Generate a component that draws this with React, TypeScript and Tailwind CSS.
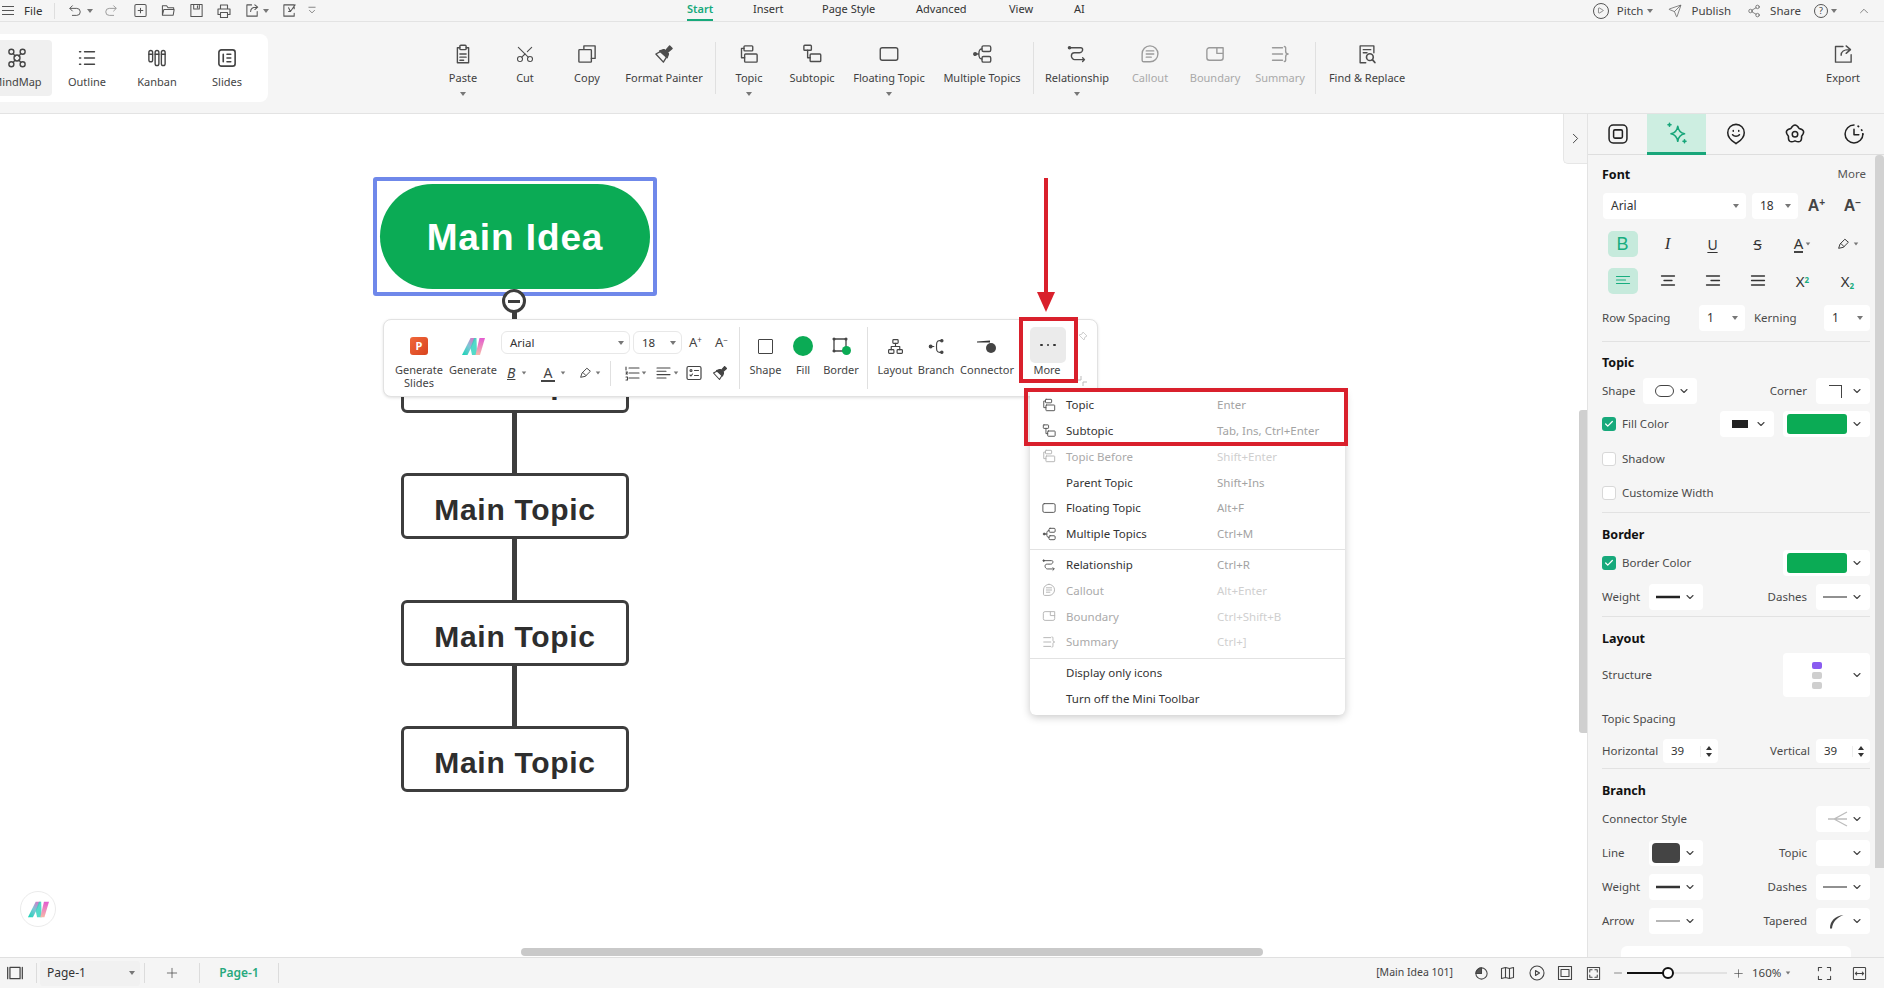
import React from "react";
import { ChevronDown, ChevronRight, ChevronUp, Plus, Minus, Scissors, Play, Send, Share2, Check } from "lucide-react";

type IP = { s?: number; className?: string; children?: React.ReactNode };
const I = ({ s = 20, className = "", children }: IP) => (
  <svg width={s} height={s} viewBox="0 0 16 16" fill="none" stroke="currentColor" strokeWidth="1.1" strokeLinecap="round" strokeLinejoin="round" className={className}>
    {children}
  </svg>
);

const TopicI = (p: IP) => <I {...p}><rect x="4" y="1.5" width="7" height="4" rx=".7" /><rect x="4.5" y="8" width="10" height="6.5" rx=".7" /><path d="M4 3.5H2v7.5h2.5" /></I>;
const SubI = (p: IP) => <I {...p}><rect x="1.5" y="1" width="6" height="4" rx=".7" /><rect x="6.5" y="8" width="8.5" height="6" rx=".7" /><path d="M4.5 5v6h2" /></I>;
const FloatI = (p: IP) => <I {...p}><rect x="1" y="3" width="14" height="10" rx="1.6" /></I>;
const MultiI = (p: IP) => <I {...p}><rect x="8" y="1.5" width="7" height="4.5" rx="1.2" /><rect x="8" y="10" width="7" height="4.5" rx="1.2" /><circle cx="2.5" cy="8" r="1.1" fill="currentColor" /><path d="M3.5 8h2M8 4C6 4 5.5 5 5.5 8s.5 4 2.5 4" /></I>;
const RelI = (p: IP) => <I {...p}><circle cx="2" cy="3" r=".9" fill="currentColor" /><path d="M3 3h8c1.5 0 1.5 1 1.5 1.5S12 7 10 7H6C4 7 3.5 8 3.5 9.5S5 12.5 6 12.5h7.5M12.5 11l1.5 1.5-1.500 1.500" /></I>;
const CallI = (p: IP) => <I {...p}><path d="M8 1.5a6.3 6.3 0 0 1 0 12.700H3c-.8 0-1.3-.5-1.3-1.300V8A6.300 6.300 0 0 1 8 1.500z" /><path d="M5 5.500h6M5 8h6M5 10.500h4" /></I>;
const BoundI = (p: IP) => <I {...p}><path d="M9.500 3H3.500A2 2 0 0 0 1.500 5v6a2 2 0 0 0 2 2h9a2 2 0 0 0 2-2V3H9.500v4.500h5" /></I>;
const SumI = (p: IP) => <I {...p}><path d="M2 3h8M2 8h8M2 13h8M11.500 2c1.500 0 1 2 1 3.500S13 8 14.500 8c-1.500 0-2 1-2 2.500s.5 3.500-1 3.500" /></I>;
const PasteI = (p: IP) => <I {...p}><path d="M5.500 3H3.500v12h9V3h-2" /><rect x="5.500" y="1" width="5" height="3.500" rx=".8" /><path d="M5.500 8h5M5.500 10.500h5M5.500 13h3" /></I>;
const CopyI = (p: IP) => <I {...p}><path d="M5.500 4V1.500h9v10h-3" /><rect x="1.500" y="4.500" width="10" height="10" rx=".6" /></I>;
const BrushI = ({ s = 20, className = "" }: IP) => (
  <svg width={s} height={s} viewBox="0 0 16 16" className={className} fill="none" stroke="currentColor" strokeWidth="1.1" strokeLinejoin="round">
    <path d="M1.500 8 L7.500 14.500 L11.500 8 L8 4.500 Z" />
    <path d="M4.500 5.500 L8 4.500 L11.500 8 L10.500 11 Z" fill="currentColor" />
    <path d="M9 5.500 L12.500 1.500 L14.500 3.500 L10.500 7 Z" fill="currentColor" />
  </svg>
);
const FindI = (p: IP) => <I {...p}><path d="M7 15H2.500V1.500h11V7" /><path d="M5 4.500h6M5 7h3" /><circle cx="10.300" cy="10.500" r="2.700" strokeWidth="1.300" /><path d="M12.300 12.500l2 2.300" strokeWidth="1.400" /></I>;
const ExportI = (p: IP) => <I {...p}><path d="M8 2H2v12.500h12.500V8.500" /><path d="M6.500 9C6.500 6 9 4.500 12.500 4.500M10.500 1.500l3.500 3-3.500 3" fill="none" /></I>;

const Logo = ({ s = 24, id }: { s?: number; id: string }) => (
  <svg width={s} height={s} viewBox="0 0 24 24">
    <defs>
      <linearGradient id={id} x1="0" y1="1" x2="1" y2="0">
        <stop offset="0" stopColor="#12d6b4" />
        <stop offset=".5" stopColor="#7fc5d6" />
        <stop offset="1" stopColor="#f05fc3" />
      </linearGradient>
      <linearGradient id={id + "b"} x1="0" y1="1" x2="0" y2="0">
        <stop offset="0" stopColor="#f7b9a9" />
        <stop offset="1" stopColor="#e35ad0" />
      </linearGradient>
    </defs>
    <path d="M1 21 L9.500 4 H15 L6.500 21 Z" fill={"url(#" + id + ")"} />
    <path d="M9.500 14 L13 4 H15.500 L16 21 H11 Z" fill="#36d3c0" opacity=".85" />
    <path d="M14.500 21 L18.500 4 H24 L19 21 Z" fill={"url(#" + id + "b)"} />
  </svg>
);

const Tri = ({ className = "" }: { className?: string }) => (
  <span className={"inline-block w-0 h-0 border-l-[3.5px] border-r-[3.5px] border-t-[4px] border-l-transparent border-r-transparent border-t-[#777] " + className} />
);

const Rib = ({ label, icon, caret, off, className = "" }: { label: string; icon: React.ReactNode; caret?: boolean; off?: boolean; className?: string }) => (
  <div className={"flex flex-col items-center pt-[20px] shrink-0 " + (off ? "text-[#a9a9a9] " : "text-[#3f3f3f] ") + className}>
    <div className={"h-[24px] flex items-center justify-center " + (off ? "text-[#9a9a9a]" : "text-[#4d4d4d]")}>{icon}</div>
    <div className="mt-[4px] h-[16px] leading-[16px] text-[11px] whitespace-nowrap">{label}</div>
    {caret && <Tri className="mt-[6px]" />}
  </div>
);
const VSep = () => <div className="w-px h-[52px] mt-[20px] bg-[#e0e0e0] shrink-0 ml-[5px]" />;

const Sel = ({ className = "", children, tri, pl = "pl-[8px]", h = "h-[26px]" }: { className?: string; children?: React.ReactNode; tri?: boolean; pl?: string; h?: string }) => (
  <div className={"bg-white rounded-[4px] flex items-center justify-between shrink-0 pr-[7px] " + pl + " " + h + " " + className}>
    <div className="flex items-center min-w-0 text-[12px] text-[#333]">{children}</div>
    {tri ? <Tri /> : <ChevronDown size={12} strokeWidth={2.2} className="text-[#444] shrink-0" />}
  </div>
);
const L = ({ children, className = "" }: { children: React.ReactNode; className?: string }) => <span className={"text-[11.5px] text-[#4a4a4a] whitespace-nowrap " + className}>{children}</span>;
const H = ({ children, className = "" }: { children: React.ReactNode; className?: string }) => <div className={"h-[26px] leading-[28px] text-[12.5px] font-bold text-[#111] " + className}>{children}</div>;
const Div = ({ className = "" }: { className?: string }) => <div className={"h-px bg-[#e2e2e2] " + className} />;
const Chk = ({ on }: { on?: boolean }) => (
  <span className={"w-[14px] h-[14px] rounded-[3px] flex items-center justify-center shrink-0 " + (on ? "bg-[#17a97b]" : "bg-white border border-[#d8d8d8]")}>
    {on && <Check size={10} strokeWidth={3} className="text-white" />}
  </span>
);
const Line = ({ w = 1.5, c = "#222" }: { w?: number; c?: string }) => (
  <svg width="26" height="6" viewBox="0 0 26 6"><rect x="1" y={3 - w / 2} width="24" height={w} fill={c} /></svg>
);
const Cell = ({ children, on }: { children: React.ReactNode; on?: boolean }) => (
  <div className="w-[45px] h-[26px] flex items-center justify-center shrink-0">
    <div className={"w-[30px] h-[26px] rounded-[5px] flex items-center justify-center " + (on ? "bg-[#c6eadc] text-[#18ad7f]" : "text-[#333]")}>{children}</div>
  </div>
);
const Stepper = () => (
  <div className="flex flex-col items-center gap-[3px] border-l border-[#eee] pl-[5px]">
    <span className="w-0 h-0 border-l-[3px] border-r-[3px] border-b-[4px] border-l-transparent border-r-transparent border-b-[#333]" />
    <span className="w-0 h-0 border-l-[3px] border-r-[3px] border-t-[4px] border-l-transparent border-r-transparent border-t-[#333]" />
  </div>
);

const AlignL = ({ s = 16 }: { s?: number }) => <I s={s}><path d="M1.500 3.500h13M1.500 7h9M1.500 10.500h13" strokeWidth="1.200" /></I>;
const AlignC = () => <I s={16}><path d="M1.500 3h13M4 7.500h8M1.500 12h13" strokeWidth="1.300" /></I>;
const AlignR = () => <I s={16}><path d="M1.500 3h13M6 7.500h8.500M1.500 12h13" strokeWidth="1.300" /></I>;
const Just = () => <I s={16}><path d="M1.500 3h13M1.500 7.500h13M1.500 12h13" strokeWidth="1.300" /></I>;
const Pen = ({ s = 14 }: { s?: number }) => (
  <I s={s}><path d="M2 12.500l1.500-4.500L9 2.500l4 3.500-5.500 5.500z" /><path d="M4.500 7.500l3.500 3.500" /></I>
);

const Mini = ({ label, icon, className = "" }: { label: string; icon: React.ReactNode; className?: string }) => (
  <div className={"flex flex-col items-center shrink-0 " + className}>
    <div className="h-[28px] mt-[12px] flex items-center justify-center text-[#444]">{icon}</div>
    <div className="mt-[3px] text-[11px] leading-[13px] text-[#444] whitespace-pre text-center">{label}</div>
  </div>
);

const MenuRow = ({ icon, t, k, off }: { icon?: React.ReactNode; t: string; k?: string; off?: boolean }) => (
  <div className="h-[25.8px] flex items-center">
    <div className={"w-[36px] flex justify-end pr-[10px] " + (off ? "text-[#b5b5b5]" : "text-[#555]")}>{icon}</div>
    <div className={"w-[151px] text-[11.5px] whitespace-nowrap " + (off ? "text-[#aaa]" : "text-[#333]")}>{t}</div>
    {k && <div className={"text-[11.5px] whitespace-nowrap " + (off ? "text-[#cfcfcf]" : "text-[#a3a3a3]")}>{k}</div>}
  </div>
);

const MainTopic = ({ className = "" }: { className?: string }) => (
  <div className={"absolute left-[401px] w-[228px] h-[66px] pt-[6px] bg-white border-[3.5px] border-[#3d3d3d] rounded-[6px] flex items-center justify-center text-[30px] tracking-[0.7px] font-bold text-[#2e2e2e] [font-family:'Liberation_Sans',Arial,sans-serif] " + className}>
    Main Topic
  </div>
);

const SBI = ({ children, className = "" }: { children: React.ReactNode; className?: string }) => <div className={"flex items-center justify-center text-[#444] shrink-0 " + className}>{children}</div>;

const ViewTab = ({ t, icon, first }: { t: string; icon: React.ReactNode; first?: boolean }) => (
  <div className={"w-[70px] h-[56px] flex flex-col items-center pt-[8px] text-[#444] shrink-0 " + (first ? "bg-[#f0f0f0] rounded-r-[4px]" : "")}>
    {icon}
    <span className="mt-[6px] text-[11px] whitespace-nowrap">{t}</span>
  </div>
);

export default function App() {
  return (
    <div className="relative w-[1884px] h-[988px] overflow-hidden flex flex-col bg-white text-[#333] [font-family:'Noto_Sans','Liberation_Sans',sans-serif]">
      {/* title bar */}
      <header className="h-[22px] shrink-0 bg-[#f5f5f5] border-b border-[#e3e3e3] flex items-center text-[11.5px] text-[#333] relative">
        <div className="flex items-center h-full text-[#555]">
          <div className="ml-[2px] w-[12px] flex flex-col gap-[3px]"><span className="h-px bg-[#555]" /><span className="h-px bg-[#555]" /><span className="h-px bg-[#555]" /></div>
          <span className="ml-[10px] text-[#333] w-[18px]">File</span>
          <span className="ml-[12px] w-px h-[16px] bg-[#dedede]" />
          <I s={14} className="ml-[13px]"><path d="M5 2L2 5l3 3M2.500 5H10a4 4 0 0 1 0 8H5" /></I>
          <Tri className="ml-[5px]" />
          <I s={14} className="ml-[11px] text-[#999]"><path d="M11 2l3 3-3 3M13.500 5H6a4 4 0 0 0 0 8h5" /></I>
          <I s={15} className="ml-[15px]"><rect x="2" y="1.500" width="12" height="13" rx="1.500" /><path d="M8 5.500v5M5.500 8h5" /></I>
          <I s={15} className="ml-[13px]"><path d="M1.500 13V3h4.500l1.500 2h6v2M1.500 13h11.500l1-6H3z" /></I>
          <I s={15} className="ml-[13px]"><path d="M2 1.500h12v13H2zM5 1.500v5h6v-5M9 3v2" /></I>
          <I s={16} className="ml-[12px]"><path d="M4.500 6V2h7v4M4.500 11.500H2V6h12v5.500h-2.500" /><rect x="4.500" y="9.500" width="7" height="5" /></I>
          <I s={15} className="ml-[13px]"><path d="M7 2H2v12h11V9M6 9c0-3 2-4.500 7-4.500M10.500 2l3 2.500-3 2.500" /></I>
          <Tri className="ml-[3px]" />
          <I s={15} className="ml-[13px]"><path d="M13 6V2H2v12h11v-3M7 5l2 4 5-7M7 9h2" /></I>
          <I s={10} className="ml-[10px]"><path d="M3 2h10M4 7l4 4 4-4" /></I>
        </div>
        <nav className="absolute left-[687px] top-0 h-[21px] flex items-start text-[11px] leading-[18px]">
          <span className="w-[66px] whitespace-nowrap"><span className="inline-block h-[21px] text-[#17a97b] font-semibold border-b-[2px] border-[#17a97b]">Start</span></span>
          <span className="w-[69px] whitespace-nowrap">Insert</span>
          <span className="w-[94px] whitespace-nowrap">Page Style</span>
          <span className="w-[93px] whitespace-nowrap">Advanced</span>
          <span className="w-[65px] whitespace-nowrap">View</span>
          <span className="whitespace-nowrap">AI</span>
        </nav>
        <div className="ml-auto flex items-center text-[11.5px] h-full text-[#444]">
          <span className="w-[16px] h-[16px] rounded-full border border-[#555] flex items-center justify-center"><Play size={7} /></span>
          <span className="ml-[8px]">Pitch</span><Tri className="ml-[4px]" />
          <Send size={14} strokeWidth={1.2} className="ml-[15px] text-[#555]" />
          <span className="ml-[9px]">Publish</span>
          <Share2 size={14} strokeWidth={1.2} className="ml-[16px] text-[#555]" />
          <span className="ml-[9px]">Share</span>
          <span className="ml-[13px] w-[14px] h-[14px] rounded-full border border-[#555] flex items-center justify-center text-[9px]">?</span>
          <Tri className="ml-[3px]" />
          <ChevronUp size={14} strokeWidth={1.2} className="ml-[20px] mr-[13px] text-[#555]" />
        </div>
      </header>

      {/* ribbon */}
      <div className="h-[92px] shrink-0 bg-[#f5f5f5] border-b border-[#e3e3e3] flex items-start">
        <div className="ml-[-18px] mt-[12px] h-[68px] w-[286px] bg-white rounded-[8px] flex items-center shrink-0">
          <ViewTab first t="MindMap" icon={<I s={20}><circle cx="3.500" cy="3" r="2" /><circle cx="12.500" cy="3" r="2" /><circle cx="3.500" cy="13" r="2" /><circle cx="12.500" cy="13" r="2" /><circle cx="8" cy="8" r="2.400" /><path d="M5 4.500l1.500 2M11 4.500l-1.500 2M5 11.500l1.500-2M11 11.500l-1.500-2" /></I>} />
          <ViewTab t="Outline" icon={<I s={20}><path d="M6 3h8M6 8h8M6 13h8M2 3h1M2 8h1M2 13h1" /></I>} />
          <ViewTab t="Kanban" icon={<I s={20}><rect x="1.500" y="2" width="3" height="9" rx="1.500" /><rect x="6.500" y="2" width="3" height="12" rx="1.500" /><rect x="11.500" y="2" width="3" height="12" rx="1.500" /><path d="M1.500 5h3M6.500 5h3M11.500 5h3" /></I>} />
          <ViewTab t="Slides" icon={<I s={20}><rect x="1.500" y="1.500" width="13" height="13" rx="2" strokeWidth="1.300" /><path d="M5 5v6M8 5h3M8 8h3M8 11h3" strokeWidth="1.300" /></I>} />
        </div>
        <div className="ml-[164px] flex items-start h-full">
          <Rib className="w-[62px]" label="Paste" caret icon={<PasteI />} />
          <Rib className="w-[62px]" label="Cut" icon={<Scissors size={20} strokeWidth={1.3} className="-rotate-90" />} />
          <Rib className="w-[62px]" label="Copy" icon={<CopyI />} />
          <Rib className="w-[92px]" label="Format Painter" icon={<BrushI />} />
          <VSep />
          <Rib className="w-[66px]" label="Topic" caret icon={<TopicI />} />
          <Rib className="w-[60px]" label="Subtopic" icon={<SubI />} />
          <Rib className="w-[94px]" label="Floating Topic" caret icon={<FloatI />} />
          <Rib className="w-[92px]" label="Multiple Topics" icon={<MultiI />} />
          <VSep />
          <Rib className="w-[86px]" label="Relationship" caret icon={<RelI />} />
          <Rib className="w-[60px]" label="Callout" off icon={<CallI />} />
          <Rib className="w-[70px]" label="Boundary" off icon={<BoundI />} />
          <Rib className="w-[60px]" label="Summary" off icon={<SumI />} />
          <VSep />
          <Rib className="w-[102px]" label="Find & Replace" icon={<FindI />} />
        </div>
        <Rib className="w-[60px] ml-auto mr-[11px]" label="Export" icon={<ExportI />} />
      </div>

      {/* body */}
      <div className="flex-1 min-h-0 flex">
        <main className="relative flex-1 min-w-0 bg-white border-r border-[#e3e3e3]">
          {/* connector */}
          <div className="absolute left-[511.5px] top-[180px] w-[5px] h-[440px] bg-[#3d3d3d]" />
          {/* selected node */}
          <div className="absolute left-[373px] top-[63px] w-[284px] h-[119px] border-[4px] border-[#6f88ea] rounded-[3px] flex items-center justify-center bg-white">
            <div className="w-[270px] h-[105px] pt-[3px] shrink-0 rounded-full bg-[#0bab55] flex items-center justify-center text-white font-bold text-[37px] tracking-[0.9px] [font-family:'Liberation_Sans',Arial,sans-serif]">Main Idea</div>
          </div>
          <div className="absolute left-[502px] top-[175px] w-[24px] h-[24px] rounded-full border-[3.5px] border-[#3d3d3d] bg-white flex items-center justify-center">
            <span className="w-[12px] h-[3px] bg-[#3d3d3d]" />
          </div>
          <MainTopic className="top-[233px]" />
          <MainTopic className="top-[359px]" />
          <MainTopic className="top-[486px]" />
          <MainTopic className="top-[612px]" />
          {/* assistant */}
          <div className="absolute left-[20px] top-[777px] w-[36px] h-[36px] rounded-full border border-[#ebebeb] bg-white flex items-center justify-center"><Logo s={22} id="lg1" /></div>
          {/* scrollbars */}
          <div className="absolute right-0 top-[296px] w-[8px] h-[323px] rounded-l-[3px] bg-[#cfcfcf]" />
          <div className="absolute left-[521px] top-[834px] w-[742px] h-[8px] rounded-full bg-[#c9c9c9]" />
          {/* collapse tab */}
          <div className="absolute right-0 top-0 w-[24px] h-[50px] bg-[#f5f5f5] border-l border-b border-[#e6e6e6] rounded-bl-[5px] flex items-center justify-center text-[#444]">
            <ChevronRight size={17} strokeWidth={1.4} />
          </div>
        </main>

        {/* right panel */}
        <aside className="relative w-[296px] shrink-0 bg-[#f5f5f5] overflow-hidden">
          <div className="h-[41px] flex border-b border-[#dedede]">
            <div className="w-[59px] flex items-center justify-center text-[#222]"><I s={22}><rect x="1.500" y="1.500" width="13" height="13" rx="3" /><rect x="4.800" y="5" width="6.400" height="6" rx="1" /></I></div>
            <div className="w-[59px] flex items-center justify-center bg-[#cdeee1] border-b-[3px] border-[#18a67a] text-[#18a67a] h-[41px]">
              <I s={24}><path d="M8.500 3.500C9 7 10.500 8 13 8.500 10.500 9 9 10.500 8.500 13.500 8 10.500 6.500 9 4 8.500 6.500 8 8 7 8.500 3.500z" /><path d="M3 1.500v2M2 2.500h2M13 12.500v2M12 13.500h2" /></I>
            </div>
            <div className="w-[59px] flex items-center justify-center text-[#222]"><I s={22}><path d="M8 15c-2-1.500-6-3.500-6-8a6 6 0 0 1 12 0c0 4.500-4 6.500-6 8z" /><path d="M5.500 8.500c1.200 1.500 3.800 1.500 5 0M6 5.500v.5M10 5.500v.5" /></I></div>
            <div className="w-[59px] flex items-center justify-center text-[#222]"><I s={22}><path d="M5.060 3.950Q8 -1 10.940 3.950Q16.560 5.220 12.760 9.550Q13.290 15.280 8 13Q2.710 15.280 3.240 9.550Q-.56 5.220 5.060 3.950Z" /><circle cx="8" cy="8.200" r="2" /></I></div>
            <div className="w-[59px] flex items-center justify-center text-[#222]"><I s={22}><path d="M8 1.500a6.500 6.500 0 1 0 6.500 6.500" /><path d="M8 4.500V8.500h3.500" /><path d="M11 2.300l.3.200M13.500 5l.2.300M14.400 8h0" strokeWidth="1.300" /></I></div>
          </div>

          <div className="pl-[14px] w-[282px]">
            <div className="h-[38px] flex items-center justify-between pr-[4px]">
              <span className="text-[12.5px] font-bold text-[#111] pt-[2px]">Font</span>
              <span className="text-[11.5px] text-[#555]">More</span>
            </div>
            <div className="h-[26px] flex items-center">
              <Sel className="w-[143px] ml-px" tri>Arial</Sel>
              <Sel className="w-[46px] ml-[6px]" tri>18</Sel>
              <span className="w-[38px] text-center text-[16px] leading-none font-semibold text-[#444] [font-family:'Liberation_Sans',sans-serif]">A<sup className="text-[10px] font-bold">+</sup></span>
              <span className="w-[36px] text-center text-[16px] leading-none font-semibold text-[#444] [font-family:'Liberation_Sans',sans-serif]">A<sup className="text-[10px] font-bold">−</sup></span>
            </div>
            <div className="mt-[12px] h-[26px] flex ml-[-2px]">
              <Cell on><span className="text-[18px] leading-none [font-family:'Liberation_Sans',sans-serif]">B</span></Cell>
              <Cell><span className="text-[17px] italic [font-family:'Liberation_Serif',serif]">I</span></Cell>
              <Cell><span className="text-[14px] underline underline-offset-2">U</span></Cell>
              <Cell><span className="text-[15px] line-through">S</span></Cell>
              <Cell><span className="flex items-center gap-[2px]"><span className="text-[15px] leading-[15px] border-b-[2px] border-[#444]">A</span><Tri className="scale-75" /></span></Cell>
              <Cell><span className="flex items-center gap-[2px]"><Pen /><Tri className="scale-75" /></span></Cell>
            </div>
            <div className="mt-[11px] h-[26px] flex ml-[-2px]">
              <Cell on><AlignL /></Cell>
              <Cell><AlignC /></Cell>
              <Cell><AlignR /></Cell>
              <Cell><Just /></Cell>
              <Cell><span className="text-[15px]">X<sup className="text-[8px] font-bold text-[#18ad7f]">2</sup></span></Cell>
              <Cell><span className="text-[15px]">X<sub className="text-[8px] font-bold text-[#18ad7f]">2</sub></span></Cell>
            </div>
            <div className="mt-[11px] h-[26px] flex items-center">
              <L className="w-[97px]">Row Spacing</L>
              <Sel className="w-[46px]" tri>1</Sel>
              <L className="ml-[9px] w-[70px]">Kerning</L>
              <Sel className="w-[46px]" tri>1</Sel>
            </div>
            <Div className="mt-[10px]" />

            <H className="mt-[7px]">Topic</H>
            <div className="mt-[3px] h-[26px] flex items-center">
              <L className="w-[41px]">Shape</L>
              <Sel className="w-[54px]" pl="pl-[12px]"><span className="w-[19px] h-[12px] rounded-full border border-[#444]" /></Sel>
              <L className="ml-auto mr-[9px]">Corner</L>
              <Sel className="w-[54px]" pl="pl-[13px]"><span className="w-[13px] h-[13px] border-t border-r border-[#444]" /></Sel>
            </div>
            <div className="mt-[7px] h-[26px] flex items-center">
              <Chk on /><L className="ml-[6px]">Fill Color</L>
              <Sel className="w-[54px] ml-auto" pl="pl-[12px]"><span className="w-[16px] h-[8px] bg-[#222] block" /></Sel>
              <Sel className="w-[87px] ml-[9px]" pl="pl-[4px]"><span className="w-[60px] h-[20px] rounded-[3px] bg-[#0bab55] block" /></Sel>
            </div>
            <div className="mt-[9px] h-[26px] flex items-center"><Chk /><L className="ml-[6px]">Shadow</L></div>
            <div className="mt-[8px] h-[26px] flex items-center"><Chk /><L className="ml-[6px]">Customize Width</L></div>
            <Div className="mt-[6px]" />

            <H className="mt-[8px]">Border</H>
            <div className="mt-[3px] h-[26px] flex items-center">
              <Chk on /><L className="ml-[6px]">Border Color</L>
              <Sel className="w-[87px] ml-auto" pl="pl-[4px]"><span className="w-[60px] h-[20px] rounded-[3px] bg-[#0bab55] block" /></Sel>
            </div>
            <div className="mt-[8px] h-[26px] flex items-center">
              <L className="w-[47px]">Weight</L>
              <Sel className="w-[54px]" pl="pl-[6px]"><Line w={2.5} /></Sel>
              <L className="ml-auto mr-[9px]">Dashes</L>
              <Sel className="w-[54px]" pl="pl-[6px]"><Line w={1} /></Sel>
            </div>
            <Div className="mt-[6px]" />

            <H className="mt-[8px]">Layout</H>
            <div className="mt-[2px] h-[44px] flex items-center">
              <L>Structure</L>
              <Sel className="w-[87px] ml-auto" h="h-[44px]" pl="pl-[29px]">
                <span className="flex flex-col gap-[3px] items-center">
                  <span className="w-[10px] h-[7px] rounded-[2px] bg-[#8a5cf0]" />
                  <span className="w-[10px] h-[7px] rounded-[2px] bg-[#cfcfcf]" />
                  <span className="w-[10px] h-[7px] rounded-[2px] bg-[#cfcfcf]" />
                </span>
              </Sel>
            </div>
            <div className="mt-[9px] h-[26px] flex items-center"><L>Topic Spacing</L></div>
            <div className="mt-[7px] h-[24px] flex items-center">
              <L className="w-[61px]">Horizontal</L>
              <div className="w-[55px] h-[24px] bg-white rounded-[4px] flex items-center justify-between pl-[8px] pr-[6px] text-[11.5px]">39<Stepper /></div>
              <L className="ml-auto mr-[6px]">Vertical</L>
              <div className="w-[54px] h-[24px] bg-white rounded-[4px] flex items-center justify-between pl-[8px] pr-[6px] text-[11.5px]">39<Stepper /></div>
            </div>
            <Div className="mt-[5px]" />

            <H className="mt-[8px]">Branch</H>
            <div className="mt-[3px] h-[26px] flex items-center">
              <L>Connector Style</L>
              <Sel className="w-[54px] ml-auto" pl="pl-[11px]">
                <svg width="21" height="16" viewBox="0 0 21 16" fill="none" stroke="#bdbdbd" strokeWidth="1.3"><path d="M1 8h6L20 1M7 8h13M7 8l13 7" /></svg>
              </Sel>
            </div>
            <div className="mt-[8px] h-[26px] flex items-center">
              <L className="w-[47px]">Line</L>
              <Sel className="w-[54px]" pl="pl-[3px]"><span className="w-[28px] h-[20px] rounded-[4px] bg-[#444] block" /></Sel>
              <L className="ml-auto mr-[9px]">Topic</L>
              <Sel className="w-[54px]" pl="pl-[4px]"><span className="w-[28px] h-[20px] block" /></Sel>
            </div>
            <div className="mt-[8px] h-[26px] flex items-center">
              <L className="w-[47px]">Weight</L>
              <Sel className="w-[54px]" pl="pl-[6px]"><Line w={2.5} c="#333" /></Sel>
              <L className="ml-auto mr-[9px]">Dashes</L>
              <Sel className="w-[54px]" pl="pl-[6px]"><Line w={1} /></Sel>
            </div>
            <div className="mt-[8px] h-[26px] flex items-center">
              <L className="w-[47px]">Arrow</L>
              <Sel className="w-[54px]" pl="pl-[6px]"><Line w={1.2} c="#888" /></Sel>
              <L className="ml-auto mr-[9px]">Tapered</L>
              <Sel className="w-[54px]" pl="pl-[13px]">
                <svg width="15" height="15" viewBox="0 0 15 15" fill="#444"><path d="M1 14.5C1 7 6 2 14.5 1 8 3.5 3.5 8 3 14.5z" /></svg>
              </Sel>
            </div>
            <div className="mt-[12px] ml-[19px] w-[230px] h-[40px] bg-white rounded-t-[6px]" />
          </div>
          <div className="absolute right-0 top-[41px] w-[9px] h-[713px] bg-[#d2d2d2] rounded-t-[4px]" />
        </aside>
      </div>

      {/* status bar */}
      <footer className="h-[31px] shrink-0 bg-[#f5f5f5] border-t border-[#e0e0e0] flex items-center text-[12px] relative z-10">
        <SBI className="w-[36px] justify-start pl-[6px]"><I s={18}><path d="M1.500 3v10M14.500 3v10" /><rect x="3.500" y="3" width="9" height="10" /></I></SBI>
        <span className="w-px h-[20px] bg-[#dcdcdc]" />
        <div className="ml-[3px] w-[100px] h-[25px] bg-[#f1f1f1] rounded-[3px] flex items-center justify-between pl-[7px] pr-[5px] text-[#333]">Page-1<Tri /></div>
        <span className="ml-[4px] w-px h-[20px] bg-[#dcdcdc]" />
        <SBI className="w-[54px]"><Plus size={16} strokeWidth={1.1} /></SBI>
        <span className="w-px h-[20px] bg-[#dcdcdc]" />
        <span className="w-[78px] text-center font-semibold text-[#27a97d]">Page-1</span>
        <span className="w-px h-[20px] bg-[#dcdcdc]" />
        <div className="ml-auto flex items-center text-[#444]">
          <span className="text-[10.5px] whitespace-nowrap">[Main Idea 101]</span>
          <SBI className="w-[18px] ml-[19px]"><I s={15}><circle cx="8" cy="8" r="6" /><path d="M2 8a6 6 0 0 1 6-6v6z" fill="#555" /></I></SBI>
          <SBI className="w-[18px] ml-[9px]"><I s={16}><path d="M1.500 3.500l4-1 4 1 4-1v10l-4 1-4-1-4 1zM5.500 2.500v10M9.500 3.500v10" /></I></SBI>
          <SBI className="w-[18px] ml-[11px]"><I s={16}><circle cx="8" cy="8" r="7" /><path d="M6.500 5.500l4 2.500-4 2.500z" /></I></SBI>
          <SBI className="w-[18px] ml-[10px]"><I s={16}><rect x="1.500" y="1.500" width="13" height="13" /><rect x="4" y="4.500" width="8" height="7" /></I></SBI>
          <SBI className="w-[18px] ml-[10px]"><I s={15}><rect x="1.500" y="1.500" width="13" height="13" /><path d="M4 6.500V4h2.500M12 6.500V4H9.500M4 9.500V12h2.500M12 9.500V12H9.500" /></I></SBI>
          <Minus size={12} strokeWidth={1.2} className="ml-[10px]" />
          <div className="relative ml-[3px] w-[100px] h-[2px] bg-[#e2e2e2]">
            <div className="h-[2px] w-[40px] bg-[#111]" />
            <div className="absolute left-[35px] top-[-5px] w-[12px] h-[12px] rounded-full bg-white border-[2px] border-[#111]" />
          </div>
          <Plus size={13} strokeWidth={1.2} className="ml-[5px]" />
          <span className="ml-[7px] w-[28px] text-[11.5px] whitespace-nowrap">160%</span>
          <Tri className="ml-[5px] scale-75" />
          <I s={15} className="ml-[26px]"><path d="M1.500 5V1.500H5M11 1.500h3.500V5M1.500 11v3.500H5M11 14.500h3.500V11" /></I>
          <I s={15} className="ml-[20px] mr-[17px]"><rect x="1.500" y="1.500" width="13" height="13" rx="1" /><path d="M4 8h8M5 6.500L3.500 8 5 9.500M11 6.500L12.500 8 11 9.500" /></I>
        </div>
      </footer>

      {/* annotation arrow */}
      <svg className="absolute left-[1036px] top-[178px]" width="20" height="136" viewBox="0 0 20 136">
        <rect x="8" y="0" width="4" height="120" fill="#d9202c" />
        <path d="M1 114h18l-9 20z" fill="#d9202c" />
      </svg>

      {/* mini toolbar */}
      <div className="absolute left-[383px] top-[319px] w-[715px] h-[78px] bg-white border border-[#e2e2e2] rounded-[8px] shadow-[0_1px_3px_rgba(0,0,0,.12)] flex items-start pl-[7px]">
        <Mini className="w-[56px]" label={"Generate\nSlides"} icon={
          <span className="w-[18px] h-[18px] rounded-[3px] bg-gradient-to-br from-[#f0673a] to-[#d9431e] text-white text-[11px] font-bold flex items-center justify-center">P</span>
        } />
        <Mini className="w-[52px]" label="Generate" icon={<Logo s={24} id="lg2" />} />
        <div className="ml-[2px] w-[238px] shrink-0 pt-[11px]">
          <div className="flex items-center">
            <div className="w-[129px] h-[23px] border border-[#e8e8e8] rounded-[6px] flex items-center justify-between pl-[8px] pr-[5px] text-[11.5px]">Arial<Tri /></div>
            <div className="ml-[3px] w-[49px] h-[23px] border border-[#e8e8e8] rounded-[6px] flex items-center justify-between pl-[8px] pr-[5px] text-[11.5px]">18<Tri /></div>
            <span className="ml-[7px] w-[22px] text-[13px] text-[#444]">A<sup className="text-[8px]">+</sup></span>
            <span className="ml-[4px] w-[22px] text-[13px] text-[#444]">A<sup className="text-[8px]">−</sup></span>
          </div>
          <div className="relative mt-[6px] h-[26px] flex items-center text-[#444]">
            <span className="ml-[6px] w-[12px] text-[14px] italic underline leading-none">B</span><Tri className="ml-[2px] scale-75" />
            <span className="ml-[14px] w-[14px] text-[14px] leading-[15px] border-b-[2px] border-[#444] text-center">A</span><Tri className="ml-[5px] scale-75" />
            <span className="ml-[13px]"><Pen /></span><Tri className="ml-[2px] scale-75" />
            <span className="ml-[9px] w-px h-[25px] bg-[#e0e0e0]" />
            <I s={16} className="ml-[13px]"><path d="M5 3h10M5 8h10M5 13h10M2 2v3M2 7h1.500L2 9h1.500M2 12h1.500v3H2" /></I><Tri className="ml-[1px] scale-75" />
            <I s={16} className="ml-[9px]"><path d="M1 3h13M1 6.300h9M1 9.600h13M1 13h9" /></I><Tri className="ml-[1px] scale-75" />
            <I s={16} className="ml-[7px]"><rect x="1" y="1.500" width="14" height="13" rx="1.500" strokeWidth="1.200" /><circle cx="5" cy="5.500" r="1" /><path d="M8.500 5.500h4M4 10l1 1 1.500-2M8.500 10.500h4" /></I>
            <BrushI s={16} className="ml-[10px]" />
          </div>
        </div>
        <span className="w-px h-[62px] mt-[7px] bg-[#e0e0e0] shrink-0" />
        <Mini className="w-[51px]" label="Shape" icon={<span className="w-[15px] h-[15px] border-[1.5px] border-[#444] rounded-[1px]" />} />
        <Mini className="w-[24px]" label="Fill" icon={<span className="w-[20px] h-[20px] rounded-full bg-[#0bab55]" />} />
        <Mini className="w-[52px]" label="Border" icon={
          <span className="relative w-[18px] h-[18px]">
            <I s={16}><rect x="2" y="2" width="12" height="12" strokeWidth="1.300" /><circle cx="2" cy="2" r="1" fill="currentColor" /><circle cx="14" cy="2" r="1" fill="currentColor" /><circle cx="2" cy="14" r="1" fill="currentColor" /></I>
            <span className="absolute left-[10px] top-[9px] w-[9px] h-[9px] rounded-full bg-[#0bab55]" />
          </span>
        } />
        <span className="w-px h-[62px] mt-[7px] bg-[#e0e0e0] shrink-0" />
        <Mini className="w-[54px]" label="Layout" icon={<I s={17}><rect x="5.500" y="1.500" width="5" height="3.500" rx=".8" /><rect x="1.500" y="11" width="5" height="3.500" rx=".8" /><rect x="9.500" y="11" width="5" height="3.500" rx=".8" /><path d="M8 5v3M4 11V8h8v3" /></I>} />
        <Mini className="w-[28px]" label="Branch" icon={<I s={17}><circle cx="2.500" cy="8" r="1.300" fill="currentColor" /><circle cx="13" cy="2.500" r="1.100" fill="currentColor" /><circle cx="13" cy="13.500" r="1.100" fill="currentColor" /><path d="M3.500 8h2M13 2.500h-2C8 2.500 8 5 8 8s0 5.500 3 5.500h2" /></I>} />
        <Mini className="w-[74px]" label="Connector" icon={
          <svg width="20" height="14" viewBox="0 0 20 14"><path d="M0 2.500 L13 1.500 V3.500 L0 3.500z" fill="#333" /><circle cx="14" cy="9" r="5" fill="#444" /></svg>
        } />
        <div className="ml-[6px] mt-[7px] w-[36px] h-[36px] bg-[#ebebeb] rounded-[5px] flex items-center justify-center gap-[4px] shrink-0">
          <span className="w-[2.5px] h-[2.5px] bg-[#333] rounded-full" /><span className="w-[2.5px] h-[2.5px] bg-[#333] rounded-full" /><span className="w-[2.5px] h-[2.5px] bg-[#333] rounded-full" />
        </div>
        <span className="absolute left-[645px] top-[43px] w-[36px] text-center text-[11px] leading-[14px] text-[#444]">More</span>
        <svg className="absolute left-[692px] top-[11px] text-[#cfcfcf]" width="12" height="12" viewBox="0 0 12 12" fill="none" stroke="currentColor"><path d="M7 1l4 4-2 1-1 3-5-5 3-1z" /></svg>
        <svg className="absolute left-[692px] top-[55px] text-[#bbb]" width="12" height="12" viewBox="0 0 12 12" fill="none" stroke="currentColor"><path d="M5 1v4H1M7 11V7h4" /></svg>
      </div>

      {/* context menu */}
      <div className="absolute left-[1030px] top-[392px] w-[315px] h-[323px] bg-white rounded-b-[6px] shadow-[0_2px_8px_rgba(0,0,0,.22)]">
        <MenuRow icon={<TopicI s={14} />} t="Topic" k="Enter" />
        <MenuRow icon={<SubI s={14} />} t="Subtopic" k="Tab, Ins, Ctrl+Enter" />
        <MenuRow off icon={<TopicI s={14} />} t="Topic Before" k="Shift+Enter" />
        <MenuRow t="Parent Topic" k="Shift+Ins" />
        <MenuRow icon={<FloatI s={14} />} t="Floating Topic" k="Alt+F" />
        <MenuRow icon={<MultiI s={14} />} t="Multiple Topics" k="Ctrl+M" />
        <Div className="mt-[2px] mb-[2px]" />
        <MenuRow icon={<RelI s={14} />} t="Relationship" k="Ctrl+R" />
        <MenuRow off icon={<CallI s={14} />} t="Callout" k="Alt+Enter" />
        <MenuRow off icon={<BoundI s={14} />} t="Boundary" k="Ctrl+Shift+B" />
        <MenuRow off icon={<SumI s={14} />} t="Summary" k="Ctrl+]" />
        <Div className="mt-[3px] mb-px" />
        <MenuRow t="Display only icons" />
        <MenuRow t="Turn off the Mini Toolbar" />
      </div>

      {/* annotation frames */}
      <div className="absolute left-[1019px] top-[317px] w-[59px] h-[66px] border-[4px] border-[#d9202c]" />
      <div className="absolute left-[1024px] top-[388px] w-[324px] h-[58px] border-[4px] border-[#d9202c]" />
    </div>
  );
}
